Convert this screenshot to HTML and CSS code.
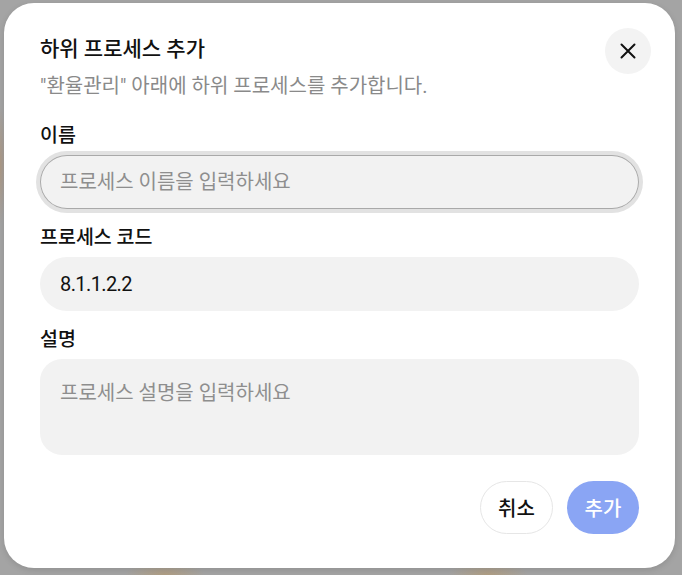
FILE: index.html
```html
<!DOCTYPE html>
<html lang="ko">
<head>
<meta charset="utf-8">
<title>하위 프로세스 추가</title>
<link rel="stylesheet" href="styles.css">
</head>
<body>
<div class="backdrop">
  <div class="dialog" role="dialog" aria-labelledby="dlg-title">
    <button class="close-btn" type="button" aria-label="닫기">
      <svg width="16" height="16" viewBox="0 0 16 16" aria-hidden="true">
        <path d="M1.5 1.5 L14.5 14.5 M14.5 1.5 L1.5 14.5" stroke="#111" stroke-width="2" stroke-linecap="round" fill="none"/>
      </svg>
    </button>
    <h2 class="title" id="dlg-title">하위 프로세스 추가</h2>
    <p class="subtitle">"환율관리" 아래에 하위 프로세스를 추가합니다.</p>

    <div class="form">
      <label class="field">
        <span class="label">이름</span>
        <input class="input is-focused" type="text" placeholder="프로세스 이름을 입력하세요" autofocus>
      </label>
      <label class="field">
        <span class="label">프로세스 코드</span>
        <input class="input input-code" type="text" value="8.1.1.2.2">
      </label>
      <label class="field">
        <span class="label">설명</span>
        <textarea class="textarea" placeholder="프로세스 설명을 입력하세요"></textarea>
      </label>
    </div>

    <div class="actions">
      <button class="btn btn-cancel" type="button">취소</button>
      <button class="btn btn-primary" type="button">추가</button>
    </div>
  </div>
</div>
</body>
</html>
```

FILE: styles.css
```css
* { box-sizing: border-box; }

html, body {
  margin: 0;
  height: 100%;
}

body {
  font-family: Roboto, "Noto Sans CJK KR", sans-serif;
  color: #111;
  background-color: #a4a4a4;
  background-image:
    radial-gradient(ellipse 40px 14px at 165px 575px, rgba(190,150,90,0.45), rgba(190,150,90,0) 100%),
    radial-gradient(ellipse 40px 14px at 488px 575px, rgba(190,150,90,0.45), rgba(190,150,90,0) 100%),
    radial-gradient(ellipse 6px 60px at 0px 165px, rgba(180,140,100,0.5), rgba(180,140,100,0) 100%);
  overflow: hidden;
}

.backdrop {
  padding: 3px 0 0 4px;
}

.dialog {
  position: relative;
  width: 671px;
  background: #fff;
  border-radius: 30px;
  padding: 32px 36px 34px 36px;
  box-shadow: 0 2px 6px rgba(0,0,0,0.12);
}

.close-btn {
  position: absolute;
  top: 25px;
  right: 24px;
  width: 46px;
  height: 46px;
  border: none;
  border-radius: 50%;
  background: #f3f3f3;
  display: flex;
  align-items: center;
  justify-content: center;
  padding: 0;
  cursor: pointer;
}

.title {
  margin: 0;
  font-size: 21px;
  line-height: 28px;
  font-weight: 500;
  color: #111;
}

.subtitle {
  margin: 10px 0 0 0;
  font-size: 20px;
  line-height: 26px;
  font-weight: 400;
  color: #8a8a8a;
}

.form {
  margin-top: 24px;
  display: flex;
  flex-direction: column;
  gap: 16px;
}

.field {
  display: flex;
  flex-direction: column;
  gap: 6px;
}

.label {
  font-size: 19.5px;
  line-height: 26px;
  font-weight: 500;
  color: #111;
}

.input {
  width: 100%;
  height: 54px;
  border: none;
  border-radius: 27px;
  background: #f2f2f2;
  padding: 0 20px;
  font-family: inherit;
  font-size: 20px;
  color: #111;
  outline: none;
}

.input-code {
  letter-spacing: -0.6px;
}

.input::placeholder,
.textarea::placeholder {
  color: #8e8e8e;
  opacity: 1;
}

.input.is-focused {
  box-shadow: inset 0 0 0 1px #a9a9a9, 0 0 0 4px #e2e2e2;
}

.textarea {
  width: 100%;
  height: 96px;
  border: none;
  border-radius: 22px;
  background: #f2f2f2;
  padding: 21px 20px;
  font-family: inherit;
  font-size: 20px;
  line-height: 26px;
  color: #111;
  resize: none;
  outline: none;
  display: block;
}

.actions {
  margin-top: 26px;
  display: flex;
  justify-content: flex-end;
  gap: 14px;
}

.btn {
  height: 53px;
  border-radius: 27px;
  font-family: inherit;
  font-size: 20px;
  font-weight: 500;
  padding: 0 15px;
  cursor: pointer;
}

.btn-cancel {
  min-width: 73px;
  background: #fff;
  color: #111;
  border: 1px solid #e6e6e6;
}

.btn-primary {
  min-width: 72px;
  background: #8aa5f4;
  color: #fff;
  border: none;
}
```
